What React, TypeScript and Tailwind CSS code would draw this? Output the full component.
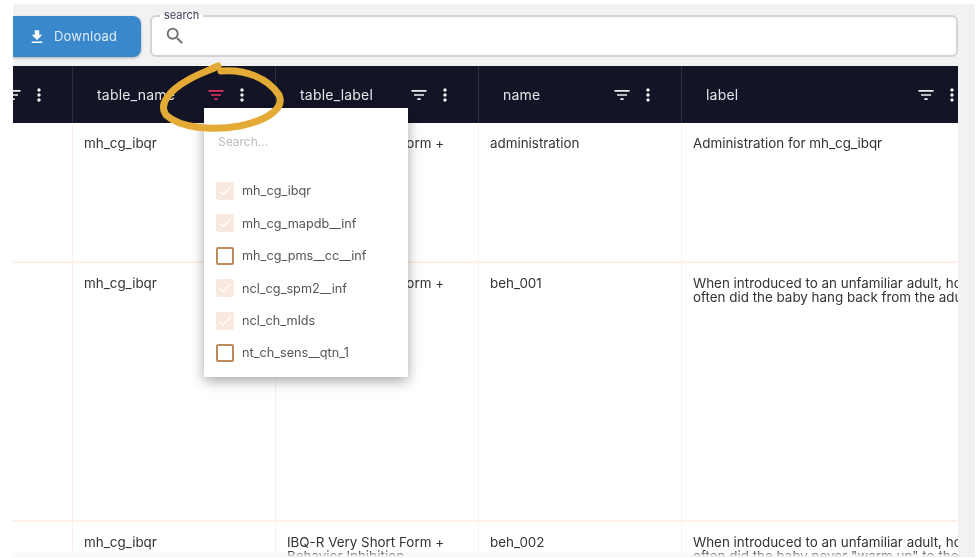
import React from "react";
import { MdFileDownload, MdFilterList, MdMoreVert, MdSearch, MdCheck } from "react-icons/md";

const columns = [
  { key: "first", label: "", width: "w-[60px]" },
  { key: "table_name", label: "table_name", width: "w-[203px]" },
  { key: "table_label", label: "table_label", width: "w-[203px]" },
  { key: "name", label: "name", width: "w-[203px]" },
  { key: "label", label: "label", width: "w-[304px]" },
];

const rows = [
  {
    height: "h-[140px]",
    cells: ["", "mh_cg_ibqr", "IBQ-R Very Short Form +", "administration", "Administration for mh_cg_ibqr"],
  },
  {
    height: "h-[259px]",
    cells: [
      "",
      "mh_cg_ibqr",
      "IBQ-R Very Short Form +",
      "beh_001",
      "When introduced to an unfamiliar adult, how often did the baby hang back from the adult",
    ],
  },
  {
    height: "h-[91px]",
    cells: [
      "",
      "mh_cg_ibqr",
      "IBQ-R Very Short Form + Behavior Inhibition",
      "beh_002",
      "When introduced to an unfamiliar adult, how often did the baby never \"warm up\" to the",
    ],
  },
];

const filterOptions = [
  { label: "mh_cg_ibqr", checked: true },
  { label: "mh_cg_mapdb__inf", checked: true },
  { label: "mh_cg_pms__cc__inf", checked: false },
  { label: "ncl_cg_spm2__inf", checked: true },
  { label: "ncl_ch_mlds", checked: true },
  { label: "nt_ch_sens__qtn_1", checked: false },
];

const HeaderCell = ({ col }: { col: (typeof columns)[number] }) => {
  const isFirst = col.key === "first";
  const isActive = col.key === "table_name";
  return (
    <div
      className={`${col.width} shrink-0 h-full flex items-center overflow-hidden pr-[23px] border-r border-[#2c2e42] ${
        isFirst ? "justify-end" : "pl-[24px]"
      }`}
    >
      {!isFirst && <span className="flex-1 text-[14px] tracking-[0.2px] text-[#e6e6ea]">{col.label}</span>}
      <MdFilterList className={`shrink-0 text-[20px] ${isActive ? "text-[#e2305f]" : "text-[#f0f0f0]"}`} />
      <MdMoreVert className="shrink-0 ml-[6px] text-[20px] text-[#f0f0f0]" />
    </div>
  );
};

export default function App() {
  return (
    <div className="w-[977px] h-[558px] overflow-hidden bg-white pt-[4px] pl-[13px] font-['Inter',sans-serif] blur-[0.4px]">
      <div className="relative w-[962px] h-[553px] bg-[#f2f2f4] overflow-hidden">
        {/* toolbar */}
        <div className="flex w-[945px] h-[62px] pt-[12px] gap-[9px]">
          <button className="w-[128px] h-[41px] shrink-0 flex items-center pl-[15px] gap-[8px] bg-[#3a88cc] rounded-r-lg shadow-[0_1px_3px_rgba(0,0,0,0.3)] text-[13px] tracking-[0.2px] text-[#dfeaf5]">
            <MdFileDownload className="text-[18px] text-white" />
            Download
          </button>
          <fieldset className="flex-1 min-w-0 h-[47px] -mt-[6px] pl-[7px] bg-white border-2 border-[#d4d4d6] rounded-md">
            <legend className="ml-[1px] px-[4px] text-[11px] leading-[11px] text-[#3d3f55]">search</legend>
            <div className="flex items-center h-[30px] pl-[5px]">
              <MdSearch className="text-[22px] text-[#6b6b6b]" />
            </div>
          </fieldset>
        </div>

        {/* table */}
        <div className="w-[945px] h-[491px] overflow-hidden bg-white">
          <div className="flex w-[973px] h-[57px] bg-[#131527]">
            {columns.map((col) => (
              <HeaderCell key={col.key} col={col} />
            ))}
          </div>
          {rows.map((row, i) => (
            <div key={i} className={`flex w-[973px] ${row.height} border-b-2 border-[#fdf0e8]`}>
              {columns.map((col, j) => (
                <div
                  key={col.key}
                  className={`${col.width} shrink-0 h-full px-[11px] pt-[13px] border-r border-[#fbefe7] text-[13.4px] leading-[14px] text-[#333333]`}
                >
                  {row.cells[j]}
                </div>
              ))}
            </div>
          ))}
        </div>

        {/* white fade over the cut bottom edge */}
        <div className="absolute left-0 bottom-0 w-[945px] h-[6px] bg-gradient-to-b from-transparent to-[#f7f7f7]" />

        {/* filter popup */}
        <div className="absolute left-[191px] top-[104px] w-[204px] h-[269px] bg-white shadow-[0_4px_12px_rgba(0,0,0,0.35)] pl-[12px]">
          <input
            placeholder="Search..."
            className="block w-[170px] h-[16px] mt-[26px] ml-[2px] text-[12px] text-[#333333] outline-none placeholder:text-[#bcbcbc]"
          />
          <div className="flex flex-col gap-[14.4px] mt-[32px]">
            {filterOptions.map((opt) => (
              <label key={opt.label} className="flex items-center gap-[8px] h-[18px] text-[12.7px] text-[#555555]">
                {opt.checked ? (
                  <span className="flex items-center justify-center w-[18px] h-[18px] rounded-[2px] bg-[#f9e8df]">
                    <MdCheck className="text-[16px] text-white" />
                  </span>
                ) : (
                  <span className="w-[18px] h-[18px] rounded-[2px] border-2 border-[#bd8a5c] bg-white" />
                )}
                {opt.label}
              </label>
            ))}
          </div>
        </div>

        {/* hand drawn circle around the active filter */}
        <svg className="absolute left-[137px] top-[54px] pointer-events-none" width="150" height="84" viewBox="150 58 150 84" fill="none">
          <path
            d="M221 71 C 245 69 268 78 279 95 C 285 108 268 120 240 126 C 212 131 180 128 166 115 C 158 104 170 90 188 80 C 198 74 208 71 218 66"
            stroke="#e3aa36"
            strokeWidth="7"
            strokeLinecap="round"
          />
        </svg>
      </div>
    </div>
  );
}
